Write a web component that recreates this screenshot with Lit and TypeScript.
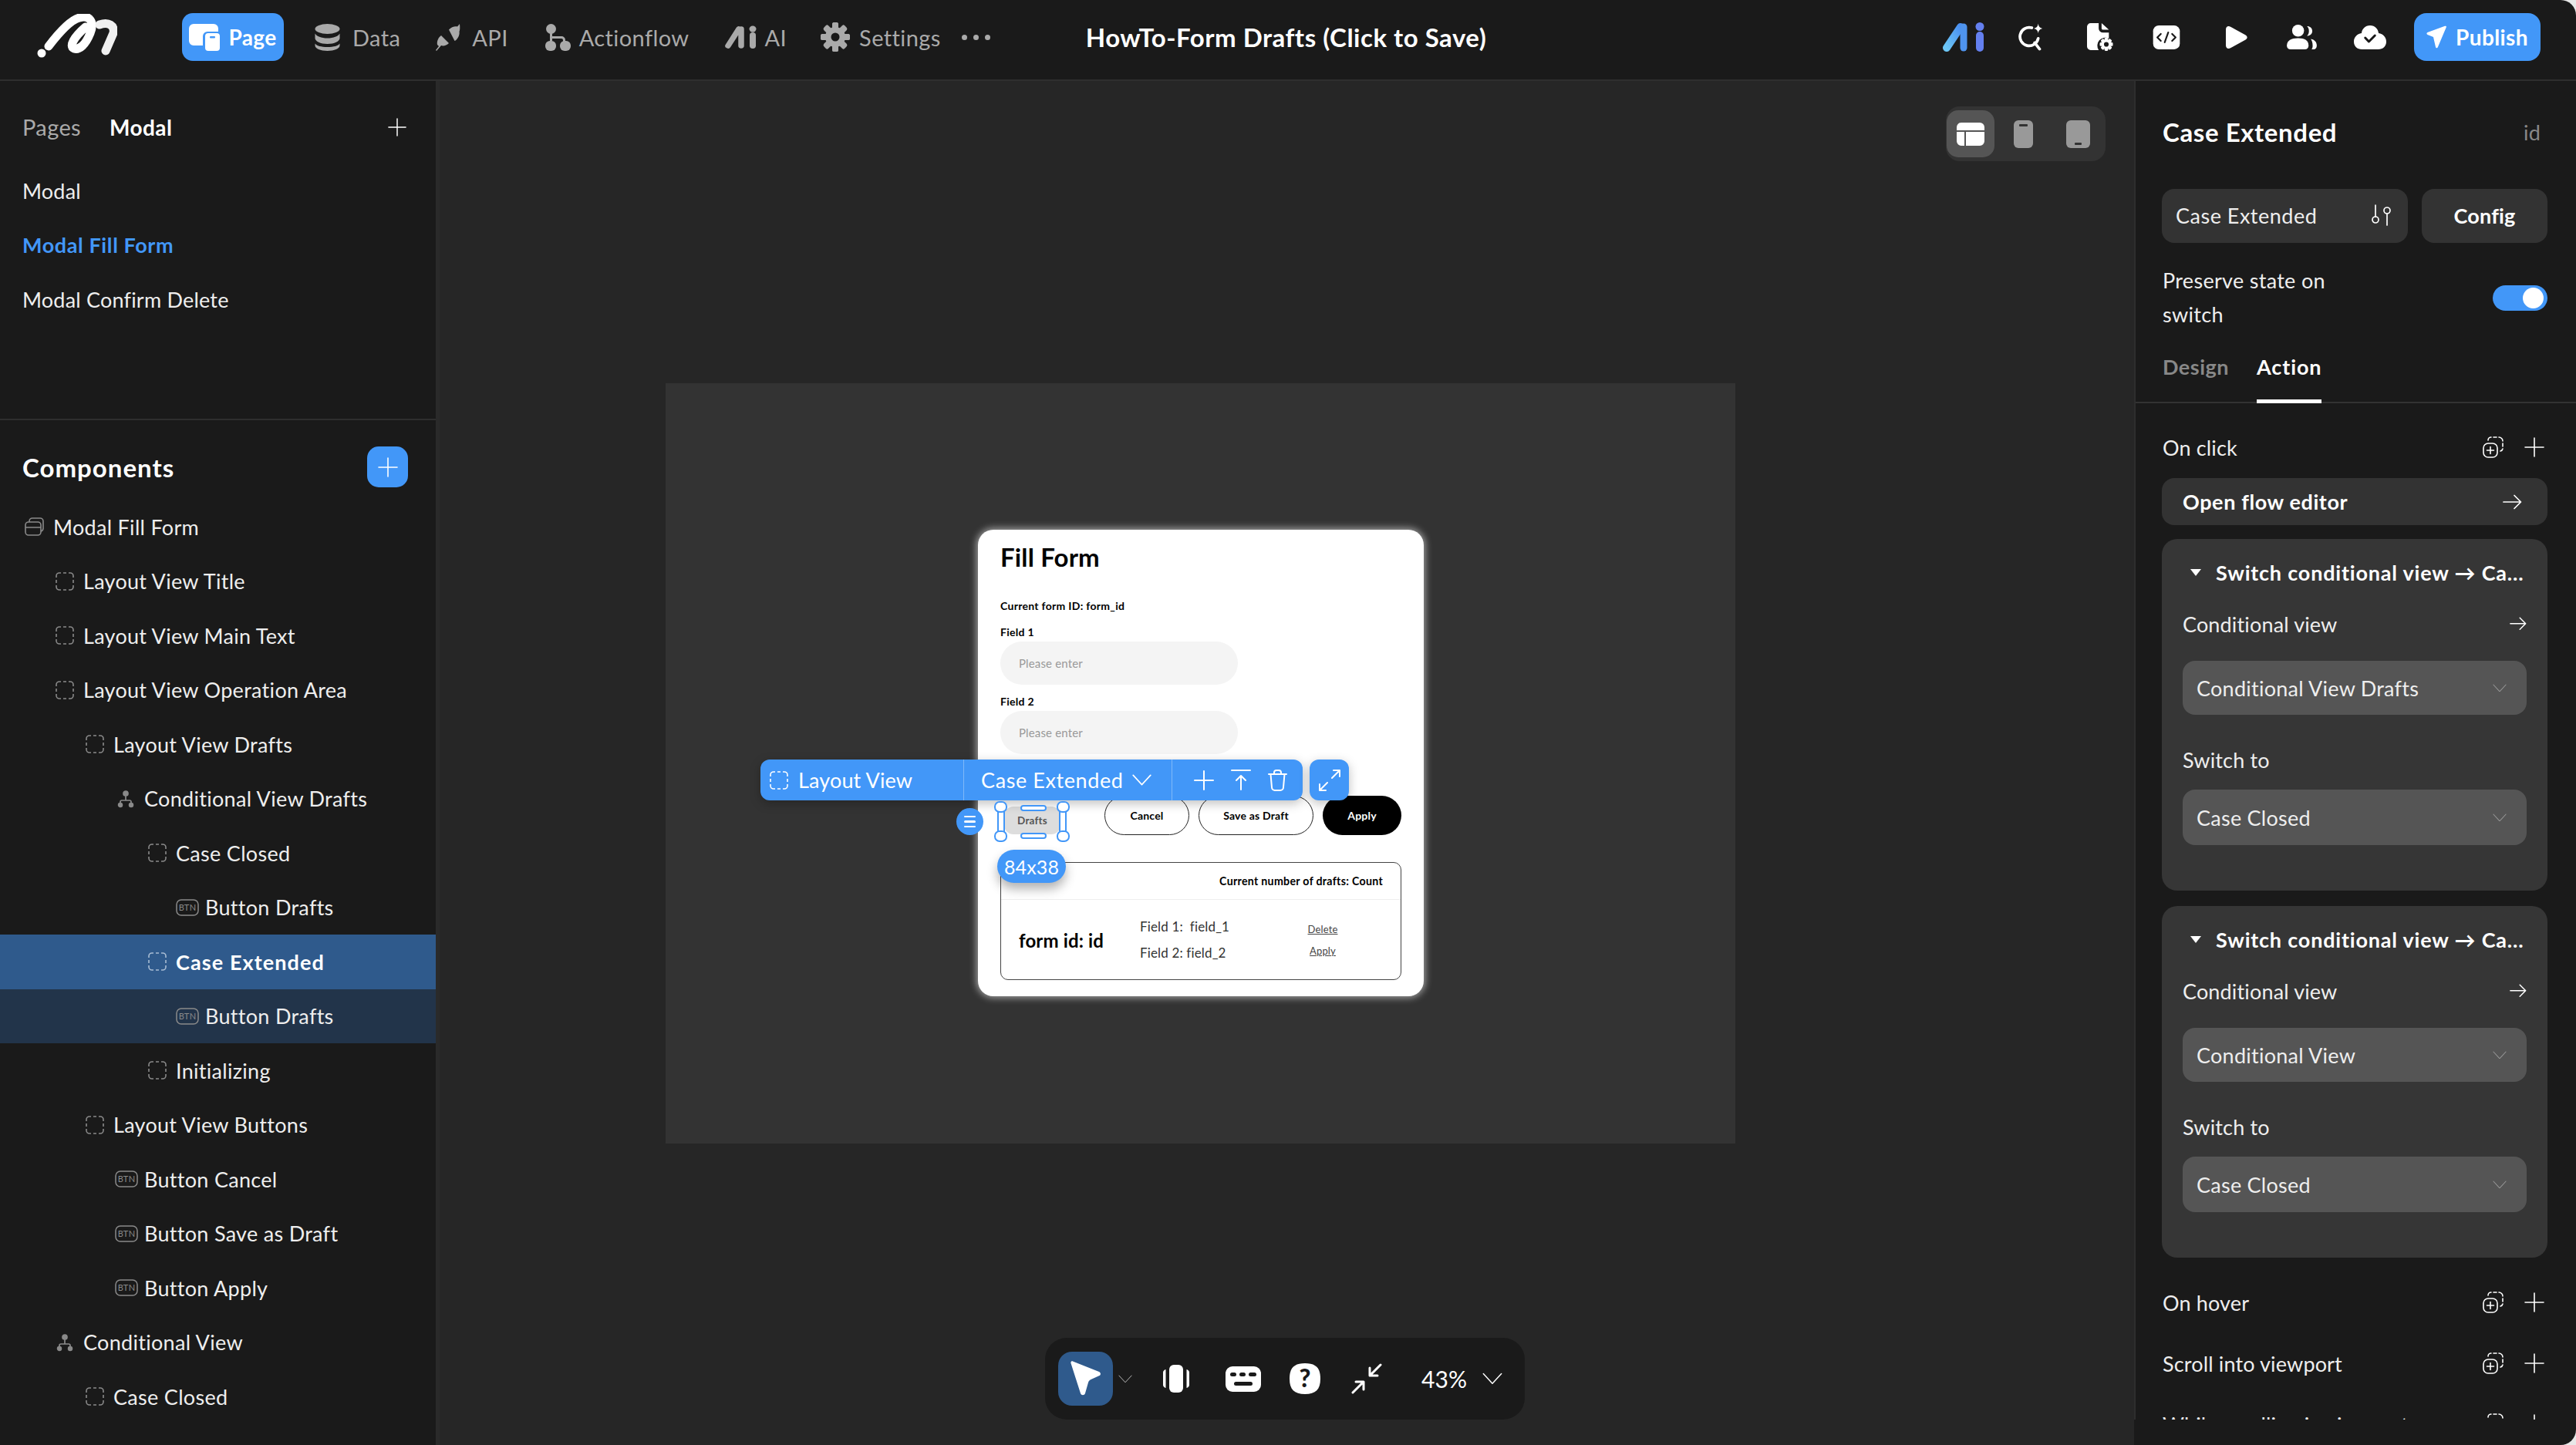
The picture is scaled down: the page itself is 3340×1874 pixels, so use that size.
import { LitElement, html, css, svg } from "lit";
import { customElement } from "lit/decorators.js";

// ---- icons ----
const dashedPath = "M1 7V5a4 4 0 0 1 4-4h2M10 1h4M17 1h2a4 4 0 0 1 4 4v2M23 10v4M23 17v2a4 4 0 0 1-4 4h-2M14 23h-4M7 23H5a4 4 0 0 1-4-4v-2M1 14v-4";
const dashed = (color = "#8a8a8a") => html`<svg width="24" height="24" viewBox="0 0 24 24" fill="none" stroke="${color}" stroke-width="1.6"><path d="${dashedPath}"/></svg>`;
const modal = html`<svg width="25" height="24" viewBox="0 0 25 24" fill="none" stroke="#8a8a8a" stroke-width="1.6"><rect x="1" y="6" width="20" height="17" rx="4"/><path d="M1 13h20M6 6V5a4 4 0 0 1 4-4h10a4 4 0 0 1 4 4v9a4 4 0 0 1-3 4"/></svg>`;
const btn = html`<svg width="30" height="22" viewBox="0 0 30 22"><rect x="1" y="1" width="28" height="20" rx="6" fill="none" stroke="#8a8a8a" stroke-width="1.5"/><text x="15" y="15" text-anchor="middle" font-size="11" font-family="Lato, sans-serif" fill="#8a8a8a">BTN</text></svg>`;
const cond = html`<svg width="24" height="24" viewBox="0 0 24 24" fill="none" stroke="#8a8a8a" stroke-width="1.7"><circle cx="12" cy="5" r="3" fill="#8a8a8a"/><path d="M12 8v6M5 19v-3a2 2 0 0 1 2-2h10a2 2 0 0 1 2 2v3"/><circle cx="5" cy="20" r="2.4" fill="#8a8a8a"/><circle cx="19" cy="20" r="2.4" fill="#8a8a8a"/></svg>`;
const plus = (size = 26, w = 1.8, color = "#fff") => html`<svg width="${size}" height="${size}" viewBox="0 0 26 26" fill="none" stroke="${color}" stroke-width="${w}" stroke-linecap="round"><path d="M13 1v24M1 13h24"/></svg>`;
const chevron = (w = 26, color = "#fff", sw = 1.6) => html`<svg width="${w}" height="${w * 0.6}" viewBox="0 0 26 16" fill="none" stroke="${color}" stroke-width="${sw}" stroke-linecap="round" stroke-linejoin="round"><path d="M1 1.5l12 13 12-13"/></svg>`;
const arrowRight = (w = 25) => html`<svg width="${w}" height="${w * 0.8}" viewBox="0 0 25 20" fill="none" stroke="#fff" stroke-width="1.7" stroke-linecap="round" stroke-linejoin="round"><path d="M1 10h22M15 1.5l8.5 8.5-8.5 8.5"/></svg>`;
const addBlock = html`<svg width="27" height="28" viewBox="0 0 27 28" fill="none" stroke="#fff" stroke-width="1.6" stroke-linecap="round"><rect x="1" y="9" width="18" height="18" rx="6"/><path d="M10 13.5v9M5.500 18h9M7 5a4 4 0 0 1 4-4M14 1h4M21 1a5 5 0 0 1 5 5M26 9v4M26 16a4 4 0 0 1-3 3"/></svg>`;

const gearTeeth = [0, 45, 90, 135, 180, 225, 270, 315];

const iconPage = html`<svg width="42" height="36" viewBox="0 0 42 36"><path d="M0 7a6 6 0 0 1 6-6h26a6 6 0 0 1 6 6v4H24a6 6 0 0 0-6 6v12H6a6 6 0 0 1-6-6z" fill="#fff"/><rect x="21" y="13" width="19" height="23" rx="4" fill="#fff"/><rect x="27" y="17" width="7" height="2.500" rx="1" fill="#4297f8"/></svg>`;
const iconData = html`<svg width="33" height="35" viewBox="0 0 33 35" fill="#aaa"><ellipse cx="16.500" cy="6.500" rx="16" ry="6.500"/><path d="M.5 12.500c2 3.500 8 6 16 6s14-2.500 16-6v6c0 4-7 7.500-16 7.500S.5 22.500.5 18.500z"/><path d="M.5 25.500c2 3 8 4.500 16 4.500s14-1.500 16-4.500V28c0 4-7 7-16 7S.5 32 .5 28z"/></svg>`;
const iconApi = html`<svg width="35" height="35" viewBox="0 0 35 35" fill="#aaa"><path d="M17 7.500c3-4 9-5 11-4l3-3.500c.5 4 .5 8-.5 10 1 5-3 11-6 12z"/><path d="M2 27c-1-5 2-10 5-12l10 10c-3 3-7 4-10 3l-6 7-1-1 4-5z"/></svg>`;
const iconFlow = html`<svg width="33" height="35" viewBox="0 0 33 35" fill="#aaa"><rect x="1" y="0" width="13" height="13" rx="6.500"/><rect x="6" y="12" width="3" height="10"/><path d="M7 16h14a5 5 0 0 1 5 5v2h-3v-2a2 2 0 0 0-2-2H7z"/><rect x="0" y="22" width="14" height="13" rx="6"/><rect x="19" y="22" width="14" height="13" rx="6"/></svg>`;
const iconAiGrey = html`<svg width="42" height="30" viewBox="0 0 42 33" preserveAspectRatio="none" fill="none" stroke="#aaa" stroke-linecap="round"><path d="M4 29L18 5M21 5v24" stroke-width="7.500"/><path d="M36 14v15" stroke-width="8"/><circle cx="36" cy="5" r="4.500" fill="#aaa" stroke="none"/></svg>`;
const iconAiColor = html`<svg width="56" height="38" viewBox="0 0 56 38" fill="none" stroke-linecap="round"><defs><linearGradient id="aiA" x1="0" y1="1" x2="1" y2="0"><stop offset="0" stop-color="#6cc6f6"/><stop offset="1" stop-color="#4a8ff0"/></linearGradient></defs><path d="M6 33L24 6" stroke="url(#aiA)" stroke-width="10"/><path d="M28 6v27" stroke="#4f94ee" stroke-width="9"/><path d="M49 17v16" stroke="#6480f0" stroke-width="10"/><circle cx="49" cy="5.500" r="5.500" fill="#6480f0"/></svg>`;
const iconGear = html`<svg width="38" height="38" viewBox="0 0 38 38"><g fill="#aaa">${gearTeeth.map((a) => svg`<rect x="15" y="0" width="8" height="38" rx="2.500" transform="rotate(${a} 19 19)"/>`)}</g><circle cx="19" cy="19" r="13" fill="#aaa"/><circle cx="19" cy="19" r="5.500" fill="#1a1a1a"/></svg>`;
const iconQ = html`<svg width="33" height="36" viewBox="0 0 36 38" fill="none" stroke="#fff" stroke-width="4" stroke-linecap="round"><path d="M19 6a13 13 0 1 0 9 15"/><path d="M23 27l7 9"/><path d="M28 0c.6 4 2 6 6 7-4 1-5.400 3-6 7-.6-4-2-6-6-7 4-1 5.400-3 6-7z" fill="#fff" stroke="none"/></svg>`;
const iconDoc = html`<svg width="34" height="36" viewBox="0 0 36 38"><path d="M0 5a5 5 0 0 1 5-5h11v7a6 6 0 0 0 6 6h8v8a11 11 0 0 0-14 16H5a5 5 0 0 1-5-5z" fill="#fff"/><path d="M20 0l10 9h-8a2 2 0 0 1-2-2z" fill="#fff"/><g fill="#fff">${gearTeeth.slice(0, 4).map((a) => svg`<rect x="24" y="20" width="5" height="18" rx="1.500" transform="rotate(${a} 26.500 29)"/>`)}</g><circle cx="26.500" cy="29" r="4.500" fill="#1a1a1a" stroke="#fff" stroke-width="2.500"/></svg>`;
const iconCode = html`<svg width="36" height="31" viewBox="0 0 38 34"><rect width="38" height="34" rx="8" fill="#fff"/><path d="M11 12l-5 5 5 5M27 12l5 5-5 5M21.500 10l-5 14" fill="none" stroke="#1a1a1a" stroke-width="2.400" stroke-linecap="round" stroke-linejoin="round"/></svg>`;
const iconPlay = html`<svg width="28" height="31" viewBox="0 0 30 32"><path d="M0 5c0-4 3-6 7-3.500l20 11c3.500 2 3.500 5 0 7l-20 11C3 33 0 31 0 27z" fill="#fff"/></svg>`;
const iconUsers = html`<svg width="39" height="32" viewBox="0 0 40 33" fill="#fff"><ellipse cx="15" cy="8" rx="8" ry="8"/><path d="M0 28c0-7 6-10 15-10s14 3 14 10c0 3-2 5-5 5H5c-3 0-5-2-5-5z"/><path d="M27 2c4 0 7 2.500 7 6.500S31 15 27 15c2-2 2.500-4 2.500-6.500S29 4 27 2z"/><path d="M32 19c5 1 8 4 8 9 0 3-2 5-4 5h-3c1-1 1.500-3 1.500-5 0-4-1-7-2.500-9z"/></svg>`;
const iconCloud = html`<svg width="42" height="31" viewBox="0 0 40 31" preserveAspectRatio="none"><path d="M20 0c6 0 10 4.500 10.500 10C36 11 40 15 40 21c0 6-4 10-10 10H10C4 31 0 27 0 21c0-6 4-10 9.500-11C10 4.500 14 0 20 0z" fill="#fff"/><path d="M14 16l4.500 5L26 13" fill="none" stroke="#1a1a1a" stroke-width="2.800" stroke-linecap="round" stroke-linejoin="round"/></svg>`;
const iconPlane = html`<svg width="26" height="30" viewBox="0 0 26 30"><path d="M24 .8L1.500 9c-1.500.6-1.500 2.500 0 3l7.500 3 3 13c.4 1.600 2.200 1.800 2.800.3L25.800 2.300c.5-1.100-.6-2-1.800-1.500z" fill="#fff"/></svg>`;

const topIcons = [
  { i: iconAiColor, m: 0 },
  { i: iconQ, m: 43 },
  { i: iconDoc, m: 56 },
  { i: iconCode, m: 51 },
  { i: iconPlay, m: 59 },
  { i: iconUsers, m: 51 },
  { i: iconCloud, m: 48 },
];

const rows = [
  { t: "Modal Fill Form", l: 32, i: modal },
  { t: "Layout View Title", l: 72, i: dashed() },
  { t: "Layout View Main Text", l: 72, i: dashed() },
  { t: "Layout View Operation Area", l: 72, i: dashed() },
  { t: "Layout View Drafts", l: 111, i: dashed() },
  { t: "Conditional View Drafts", l: 151, i: cond },
  { t: "Case Closed", l: 192, i: dashed() },
  { t: "Button Drafts", l: 228, i: btn, b: true },
  { t: "Case Extended", l: 192, i: dashed("#a9bdd4"), s: "sel" },
  { t: "Button Drafts", l: 228, i: btn, b: true, s: "sub" },
  { t: "Initializing", l: 192, i: dashed() },
  { t: "Layout View Buttons", l: 111, i: dashed() },
  { t: "Button Cancel", l: 149, i: btn, b: true },
  { t: "Button Save as Draft", l: 149, i: btn, b: true },
  { t: "Button Apply", l: 149, i: btn, b: true },
  { t: "Conditional View", l: 72, i: cond },
  { t: "Case Closed", l: 111, i: dashed() },
];

const actionCards = [
  { view: "Conditional View Drafts", to: "Case Closed" },
  { view: "Conditional View", to: "Case Closed" },
];

@customElement("app-root")
export class AppRoot extends LitElement {
  static styles = css`
    :host {
      display: block;
      width: 3340px;
      height: 1874px;
      overflow: hidden;
      background: #e8e8e8;
      font-family: Lato, "Noto Sans", sans-serif;
      color: #fff;
      font-size: 27px;
      letter-spacing: .15px;
    }
    svg { display: block; flex: none; }
    .app {
      width: 3340px;
      height: 1874px;
      background: #1a1a1a;
      border-radius: 0 20px 20px 0;
      overflow: hidden;
      display: flex;
      flex-direction: column;
    }

    /* top bar */
    .top {
      height: 105px;
      box-sizing: border-box;
      flex: none;
      display: flex;
      align-items: center;
      border-bottom: 2px solid #2e2e2e;
      padding: 0 0 7px 46px;
    }
    .logo { margin-right: 84px; }
    .nav { display: flex; align-items: center; height: 62px; color: #aaa; font-size: 29px; letter-spacing: .4px; }
    .nav.active { background: #4297f8; color: #fff; width: 132px; border-radius: 14px; justify-content: center; gap: 9px; margin-right: 40px; font-weight: 700; font-size: 28px; }
    .n-data { gap: 16px; margin-right: 46px; }
    .n-api { gap: 12px; margin-right: 48px; }
    .n-flow { gap: 11px; margin-right: 46px; }
    .n-ai { gap: 10px; margin-right: 44px; }
    .n-set { gap: 12px; margin-right: 27px; }
    .dots { display: flex; gap: 8px; }
    .dots i { width: 7px; height: 7px; border-radius: 50%; background: #aaa; }
    .doc-title { margin-left: 124px; font-size: 33px; font-weight: 700; letter-spacing: .5px; }
    .top-right { margin-left: auto; display: flex; align-items: center; padding-right: 46px; }
    .publish { height: 62px; width: 164px; margin-left: 36px; background: #4297f8; border-radius: 16px; display: flex; align-items: center; justify-content: center; gap: 12px; font-weight: 700; font-size: 28px; letter-spacing: .4px; }

    .main { flex: 1; display: flex; min-height: 0; }

    /* left panel */
    .left { width: 570px; box-sizing: border-box; flex: none; border-right: 5px solid #2a2a2a; overflow: hidden; }
    .pages { box-sizing: border-box; height: 440px; border-bottom: 2px solid #2e2e2e; }
    .pages-head { display: flex; align-items: center; height: 107px; padding: 0 29px; gap: 37px; }
    .pages-head span { line-height: 40px; margin-top: 13px; color: #aaa; font-size: 29px; letter-spacing: .4px; }
    .pages-head span.on { color: #fff; font-weight: 700; font-size: 28px; }
    .pages-head svg { margin: 13px 9px 0 auto; }
    .page-row { height: 70.500px; display: flex; align-items: center; padding-left: 29px; color: #eee; letter-spacing: .2px; }
    .page-row.on { color: #4297f8; font-weight: 700; letter-spacing: .6px; }
    .comp-head { display: flex; align-items: center; justify-content: space-between; padding: 34px 36px 16px 29px; }
    .comp-title { font-size: 33px; font-weight: 700; letter-spacing: 1px; }
    .add { width: 53px; height: 53px; border-radius: 15px; background: #4297f8; display: flex; align-items: center; justify-content: center; }
    .row { height: 70.500px; display: flex; align-items: center; gap: 12px; color: #eee; letter-spacing: .3px; }
    .row.tight { gap: 8px; }
    .row.sel { background: #2f5a8c; color: #fff; font-weight: 700; letter-spacing: 1.1px; }
    .row.sub { background: #22344a; }

    /* canvas */
    .canvas { flex: 1; position: relative; background: #262626; padding: 392px 0 0 293px; box-sizing: border-box; }
    .board { width: 1387px; height: 986px; background: #333; padding: 190px 0 0 405px; box-sizing: border-box; }
    .form {
      width: 578px;
      height: 605px;
      box-sizing: border-box;
      position: relative;
      background: #fff;
      border-radius: 20px;
      padding: 15px 29px 0;
      color: #000;
      box-shadow: 0 0 10px 2px rgba(255, 255, 255, .55);
    }
    .f-title { font-size: 33px; line-height: 40px; font-weight: 700; }
    .f-small { font-size: 14px; line-height: 20px; font-weight: 700; letter-spacing: .3px; }
    .f-id { margin-top: 34px; }
    .f-label { margin-top: 14px; }
    .f-label.second { margin-top: 12px; }
    .f-input { margin-top: 2px; width: 308px; height: 56px; border-radius: 28px; background: #f4f4f4; color: #999; font-size: 15px; display: flex; align-items: center; padding-left: 24px; box-sizing: border-box; }
    .f-btns { display: flex; margin-top: 54px; height: 51px; }
    .pill { height: 51px; border-radius: 26px; border: 1.500px solid #222; box-sizing: border-box; display: flex; align-items: center; justify-content: center; font-size: 14px; font-weight: 700; letter-spacing: .2px; }
    .pill.drafts { margin: 14px 0 0 5px; width: 73px; height: 36px; background: #ddd; border: none; color: #555; font-size: 13.500px; border-radius: 12px; }
    .pill.cancel { margin-left: auto; width: 110px; }
    .pill.save { margin-left: 12px; width: 149px; }
    .pill.apply { margin-left: 12px; width: 102px; background: #000; color: #fff; border: none; }
    .box { margin-top: 35px; height: 153px; border: 1.500px solid #444; border-radius: 10px; box-sizing: border-box; }
    .box-head { height: 47px; display: flex; align-items: center; justify-content: flex-end; padding-right: 23px; border-bottom: 1px solid #eee; font-size: 14.200px; font-weight: 700; letter-spacing: .3px; }
    .box-body { display: flex; height: 104px; align-items: center; padding-left: 23px; }
    .box-id { width: 157px; font-size: 24px; font-weight: 700; }
    .box-fields { width: 217px; font-size: 17px; line-height: 34px; color: #333; }
    .box-links { font-size: 13px; line-height: 28px; text-decoration: underline; color: #444; text-align: center; width: 40px; }

    /* selection overlays on the form */
    .sel-bar { position: absolute; left: -282px; top: 298px; width: 703px; height: 53px; background: #4297f8; border-radius: 12px; display: flex; align-items: center; color: #fff; font-size: 27px; box-shadow: 0 4px 14px rgba(0, 0, 0, .25); }
    .sel-a { width: 264px; display: flex; align-items: center; gap: 13px; padding-left: 12px; box-sizing: border-box; height: 100%; border-right: 1.500px solid #7fb8f8; }
    .sel-b { width: 270px; display: flex; align-items: center; gap: 11px; padding-left: 22px; box-sizing: border-box; height: 100%; border-right: 1.500px solid #7fb8f8; letter-spacing: .6px; }
    .sel-c { display: flex; align-items: center; gap: 22px; padding-left: 28px; }
    .sel-exp { position: absolute; left: 430px; top: 298px; width: 51px; height: 53px; background: #4297f8; border-radius: 12px; display: flex; align-items: center; justify-content: center; box-shadow: 0 4px 14px rgba(0, 0, 0, .25); }
    .burger { position: absolute; left: -28px; top: 361px; width: 35px; height: 35px; border-radius: 50%; background: #4297f8; display: flex; flex-direction: column; gap: 4px; align-items: center; justify-content: center; }
    .burger i { width: 15px; height: 2.500px; border-radius: 2px; background: #fff; }
    .size { position: absolute; left: 25px; top: 415px; width: 89px; height: 43px; border-radius: 22px; background: #4297f8; color: #fff; font-size: 25px; display: flex; align-items: center; justify-content: center; box-shadow: 0 8px 14px rgba(0, 0, 0, .3); }
    .h { position: absolute; background: #fff; border: 2.500px solid #4297f8; box-sizing: border-box; }
    .h.c { width: 17px; height: 15px; border-radius: 7px; }
    .h.v { width: 10px; height: 40px; top: 360px; border-radius: 5px; }
    .h.w { width: 34px; height: 8px; left: 55px; border-radius: 4px; }
    .h.lft { left: 25px; }
    .h.rgt { left: 105px; }
    .h.tp { top: 357px; }
    .h.bt { top: 393px; }
    .h.c.lft { left: 21px; }
    .h.c.rgt { left: 102px; }
    .h.c.tp { top: 352px; }
    .h.c.bt { top: 390px; }

    /* floating bars */
    .views { position: absolute; left: 1953px; top: 33px; width: 207px; height: 71px; background: #333; border-radius: 18px; display: flex; align-items: center; padding-left: 1px; box-sizing: border-box; }
    .view { height: 61px; display: flex; align-items: center; justify-content: center; }
    .view.on { width: 62px; background: #555; border-radius: 15px; }
    .view.v2 { margin-left: 25px; }
    .view.v3 { margin-left: 43px; }
    .tools { position: absolute; left: 785px; top: 1630px; width: 622px; height: 106px; background: #1a1a1a; border-radius: 28px; display: flex; align-items: center; padding-left: 17px; box-sizing: border-box; }
    .t-on { width: 71px; height: 70px; background: #2f5a8c; border-radius: 18px; display: flex; align-items: center; justify-content: center; }
    .t-chev { margin-left: 7px; }
    .t-col { margin-left: 40px; }
    .t-key { margin-left: 47px; }
    .t-q { margin-left: 37px; }
    .t-fit { margin-left: 40px; }
    .zoom { font-size: 30px; margin-left: 51px; margin-right: 20px; font-weight: 400; }

    /* right panel */
    .right { width: 573px; flex: none; border-left: 2px solid #2e2e2e; box-sizing: border-box; height: 1736px; overflow: hidden; }
    .pad { padding: 0 37px 0 35px; }
    .r-head { display: flex; justify-content: space-between; align-items: center; height: 40px; padding-top: 46px; padding-bottom: 54px; }
    .r-title { font-size: 33px; font-weight: 700; letter-spacing: .6px; }
    .r-id { color: #888; font-size: 27px; margin-right: 9px; }
    .r-cfg { display: flex; gap: 18px; height: 70px; margin-left: -1px; }
    .r-input { width: 319px; background: #333; border-radius: 16px; display: flex; align-items: center; justify-content: space-between; padding: 0 20px 2px 18px; box-sizing: border-box; color: #eee; letter-spacing: .5px; }
    .r-config { width: 163px; background: #333; border-radius: 16px; display: flex; align-items: center; justify-content: center; font-weight: 700; padding-bottom: 2px; box-sizing: border-box; }
    .r-pres { margin-top: 27px; display: flex; justify-content: space-between; align-items: center; line-height: 44px; color: #eee; letter-spacing: .3px; }
    .toggle { width: 71px; height: 33px; background: #4297f8; border-radius: 17px; position: relative; }
    .toggle i { position: absolute; right: 5px; top: 3px; width: 27px; height: 27px; background: #fff; border-radius: 50%; }
    .tabs { display: flex; gap: 36px; height: 93px; box-sizing: border-box; border-bottom: 2px solid #333; }
    .tab { padding-top: 26px; line-height: 40px; color: #888; font-weight: 700; box-sizing: border-box; height: 92px; letter-spacing: .5px; }
    .tab.on { color: #fff; border-bottom: 5px solid #fff; height: 93px; letter-spacing: .9px; }
    .ev { display: flex; align-items: center; height: 40px; color: #eee; }
    .ev span { flex: 1; }
    .ev svg:last-child { margin: 0 4px 0 27px; }
    .ev.first { margin-top: 37px; }
    .flow { margin: 20px 0 0 -1px; height: 61px; background: #333; border-radius: 16px; display: flex; align-items: center; justify-content: space-between; padding: 0 33px 0 27px; font-weight: 700; letter-spacing: .6px; }
    .card { margin: 18px 0 0 -1px; height: 456px; background: #363636; border-radius: 20px; padding: 23px 27px 0; box-sizing: border-box; }
    .card + .card { margin-top: 20px; }
    .card-head { display: flex; align-items: center; height: 40px; font-weight: 700; gap: 19px; padding-left: 10px; white-space: nowrap; letter-spacing: .8px; }
    .tri { width: 0; height: 0; border-left: 7px solid transparent; border-right: 7px solid transparent; border-top: 9px solid #fff; }
    .lab { display: flex; justify-content: space-between; align-items: center; height: 40px; margin-top: 27px; color: #eee; }
    .lab.b { margin-top: 38px; }
    .select { margin-top: 28px; height: 70px; background: #555; border-radius: 16px; display: flex; align-items: center; justify-content: space-between; padding: 0 26px 0 18px; color: #eee; letter-spacing: .25px; }
    .select.b { margin-top: 19px; height: 72px; }
    .ev.hover { margin-top: 38px; }
    .ev.next { margin-top: 39px; }
  `;

  private renderCard(c: { view: string; to: string }) {
    return html`
      <div class="card">
        <div class="card-head"><i class="tri"></i><span>Switch conditional view → Ca...</span></div>
        <div class="lab"><span>Conditional view</span>${arrowRight(22)}</div>
        <div class="select"><span>${c.view}</span>${chevron(18, "#999", 1.5)}</div>
        <div class="lab b"><span>Switch to</span></div>
        <div class="select b"><span>${c.to}</span>${chevron(18, "#999", 1.5)}</div>
      </div>
    `;
  }

  private renderForm() {
    return html`
      <div class="form">
        <div class="f-title">Fill Form</div>
        <div class="f-small f-id">Current form ID: form_id</div>
        <div class="f-small f-label">Field 1</div>
        <div class="f-input">Please enter</div>
        <div class="f-small f-label second">Field 2</div>
        <div class="f-input">Please enter</div>
        <div class="f-btns">
          <div class="pill drafts">Drafts</div>
          <div class="pill cancel">Cancel</div>
          <div class="pill save">Save as Draft</div>
          <div class="pill apply">Apply</div>
        </div>
        <div class="box">
          <div class="box-head">Current number of drafts: Count</div>
          <div class="box-body">
            <div class="box-id">form id: id</div>
            <div class="box-fields"><div>Field 1:&nbsp; field_1</div><div>Field 2: field_2</div></div>
            <div class="box-links"><div>Delete</div><div>Apply</div></div>
          </div>
        </div>

        <div class="sel-bar">
          <div class="sel-a">${dashed("#fff")}<span>Layout View</span></div>
          <div class="sel-b"><span>Case Extended</span>${chevron(25, "#fff", 1.8)}</div>
          <div class="sel-c">
            ${plus(26, 2)}
            <svg width="26" height="27" viewBox="0 0 26 27" fill="none" stroke="#fff" stroke-width="2" stroke-linecap="round" stroke-linejoin="round"><path d="M1 1h24M13 26V8M7 14l6-6 6 6"/></svg>
            <svg width="25" height="28" viewBox="0 0 25 28" fill="none" stroke="#fff" stroke-width="2" stroke-linecap="round" stroke-linejoin="round"><path d="M1 6h23M8 6V4a3 3 0 0 1 3-3h3a3 3 0 0 1 3 3v2M3.500 6l1.500 17a4 4 0 0 0 4 4h7a4 4 0 0 0 4-4l1.500-17"/></svg>
          </div>
        </div>
        <div class="sel-exp">
          <svg width="28" height="28" viewBox="0 0 28 28" fill="none" stroke="#fff" stroke-width="2" stroke-linecap="round" stroke-linejoin="round"><path d="M17 11L27 1M19 1h8v8M11 17L1 27M9 27H1v-8"/></svg>
        </div>
        <div class="burger"><i></i><i></i><i></i></div>
        <div class="h v lft"></div>
        <div class="h v rgt"></div>
        <div class="h w tp"></div>
        <div class="h w bt"></div>
        <div class="h c lft tp"></div>
        <div class="h c rgt tp"></div>
        <div class="h c lft bt"></div>
        <div class="h c rgt bt"></div>
        <div class="size">84x38</div>
      </div>
    `;
  }

  render() {
    return html`
      <div class="app">
        <header class="top">
          <svg class="logo" width="106" height="60" viewBox="0 0 106 60" fill="none" stroke="#fff" stroke-width="11" stroke-linecap="round" stroke-linejoin="round">
            <circle cx="8" cy="51" r="5.500" fill="#fff" stroke="none"/>
            <path d="M17 42C30 25 45 8 57 5c13-4 20 5 14 20-6 15-14 22-21 20-7-3 0-15 15-28"/>
            <path d="M83 14c12-4 20 1 18 11L91 48" stroke="#f0f0f0"/>
          </svg>
          <div class="nav active">${iconPage}<span>Page</span></div>
          <div class="nav n-data">${iconData}<span>Data</span></div>
          <div class="nav n-api">${iconApi}<span>API</span></div>
          <div class="nav n-flow">${iconFlow}<span>Actionflow</span></div>
          <div class="nav n-ai">${iconAiGrey}<span>AI</span></div>
          <div class="nav n-set">${iconGear}<span>Settings</span></div>
          <div class="dots"><i></i><i></i><i></i></div>
          <div class="doc-title">HowTo-Form Drafts (Click to Save)</div>
          <div class="top-right">
            ${topIcons.map((t) => html`<div style="margin-left:${t.m}px">${t.i}</div>`)}
            <div class="publish">${iconPlane}<span>Publish</span></div>
          </div>
        </header>

        <div class="main">
          <aside class="left">
            <div class="pages">
              <div class="pages-head"><span>Pages</span><span class="on">Modal</span>${plus(24, 1.6)}</div>
              <div class="page-row">Modal</div>
              <div class="page-row on">Modal Fill Form</div>
              <div class="page-row">Modal Confirm Delete</div>
            </div>
            <div class="comp-head">
              <span class="comp-title">Components</span>
              <div class="add">${plus(26, 1.6)}</div>
            </div>
            ${rows.map(
              (r) => html`<div class="row ${r.s || ""} ${r.b ? "tight" : ""}" style="padding-left:${r.l}px">${r.i}<span>${r.t}</span></div>`
            )}
          </aside>

          <section class="canvas">
            <div class="board">${this.renderForm()}</div>

            <div class="views">
              <div class="view on">
                <svg width="36" height="30" viewBox="0 0 36 30"><path d="M0 6a6 6 0 0 1 6-6h24a6 6 0 0 1 6 6v4H0zM0 12h10v18H6a6 6 0 0 1-6-6zM12 12h24v12a6 6 0 0 1-6 6H12z" fill="#fff"/></svg>
              </div>
              <div class="view v2">
                <svg width="25" height="36" viewBox="0 0 25 36"><rect width="25" height="36" rx="6" fill="#999"/><rect x="7" y="5" width="11" height="3" rx="1" fill="#333"/></svg>
              </div>
              <div class="view v3">
                <svg width="31" height="36" viewBox="0 0 31 36"><rect width="31" height="36" rx="6" fill="#999"/><rect x="11" y="29" width="9" height="3" rx="1" fill="#333"/></svg>
              </div>
            </div>

            <div class="tools">
              <div class="t-on">
                <svg width="40" height="46" viewBox="0 0 40 46"><path d="M3 .5L37 14c2.500 1 2.500 4 .5 5l-11 5c-2 1-3 2-3.500 4l-4 14c-1 3-5 3-6 0L.5 3C0 1 1.500 0 3 .5z" fill="#fff"/></svg>
              </div>
              <div class="t-chev">${chevron(18, "#ccc", 1.3)}</div>
              <svg class="t-col" width="34" height="36" viewBox="0 0 34 36"><rect x="8" y="0" width="18" height="36" rx="6" fill="#fff"/><path d="M0 10c0-2 1.500-3.500 3.500-4v24c-2-.5-3.500-2-3.500-4zM34 10c0-2-1.500-3.500-3.500-4v24c2-.5 3.500-2 3.500-4z" fill="#fff"/></svg>
              <svg class="t-key" width="46" height="33" viewBox="0 0 46 33"><rect width="46" height="33" rx="9" fill="#fff"/><g fill="#1a1a1a"><rect x="6" y="8" width="8" height="5" rx="2.500"/><rect x="18" y="8" width="8" height="5" rx="2.500"/><rect x="30" y="8" width="10" height="5" rx="2.500"/><rect x="11" y="20" width="24" height="5" rx="2.500"/></g></svg>
              <svg class="t-q" width="40" height="40" viewBox="0 0 40 40"><path d="M20 0c14 0 20 6 20 20s-6 20-20 20S0 34 0 20 6 0 20 0z" fill="#fff"/><text x="20" y="31" text-anchor="middle" font-size="32" font-weight="900" font-family="Lato, sans-serif" fill="#1a1a1a">?</text></svg>
              <svg class="t-fit" width="40" height="40" viewBox="0 0 40 40" fill="none" stroke="#fff" stroke-width="3" stroke-linecap="round" stroke-linejoin="round"><path d="M38 2L25 15M24 6v10h10M2 38l13-13M16 34V24H6"/></svg>
              <div class="zoom">43%</div>
              ${chevron(26, "#fff", 1.5)}
            </div>
          </section>

          <aside class="right">
            <div class="pad">
              <div class="r-head"><span class="r-title">Case Extended</span><span class="r-id">id</span></div>
              <div class="r-cfg">
                <div class="r-input">
                  <span>Case Extended</span>
                  <svg width="28" height="28" viewBox="0 0 28 28" fill="none" stroke="#fff" stroke-width="1.700" stroke-linecap="round"><circle cx="6" cy="20" r="4"/><path d="M6 1v15"/><circle cx="21" cy="8" r="4"/><path d="M21 12v15"/></svg>
                </div>
                <div class="r-config">Config</div>
              </div>
              <div class="r-pres"><span>Preserve state on<br />switch</span><div class="toggle"><i></i></div></div>
            </div>
            <div class="tabs pad"><div class="tab">Design</div><div class="tab on">Action</div></div>
            <div class="pad">
              <div class="ev first"><span>On click</span>${addBlock}${plus(26, 1.6)}</div>
              <div class="flow"><span>Open flow editor</span>${arrowRight(25)}</div>
              ${actionCards.map((c) => this.renderCard(c))}
              <div class="ev hover"><span>On hover</span>${addBlock}${plus(26, 1.6)}</div>
              <div class="ev next"><span>Scroll into viewport</span>${addBlock}${plus(26, 1.6)}</div>
              <div class="ev next"><span>While scrolling in viewport</span>${addBlock}${plus(26, 1.6)}</div>
            </div>
          </aside>
        </div>
      </div>
    `;
  }
}
